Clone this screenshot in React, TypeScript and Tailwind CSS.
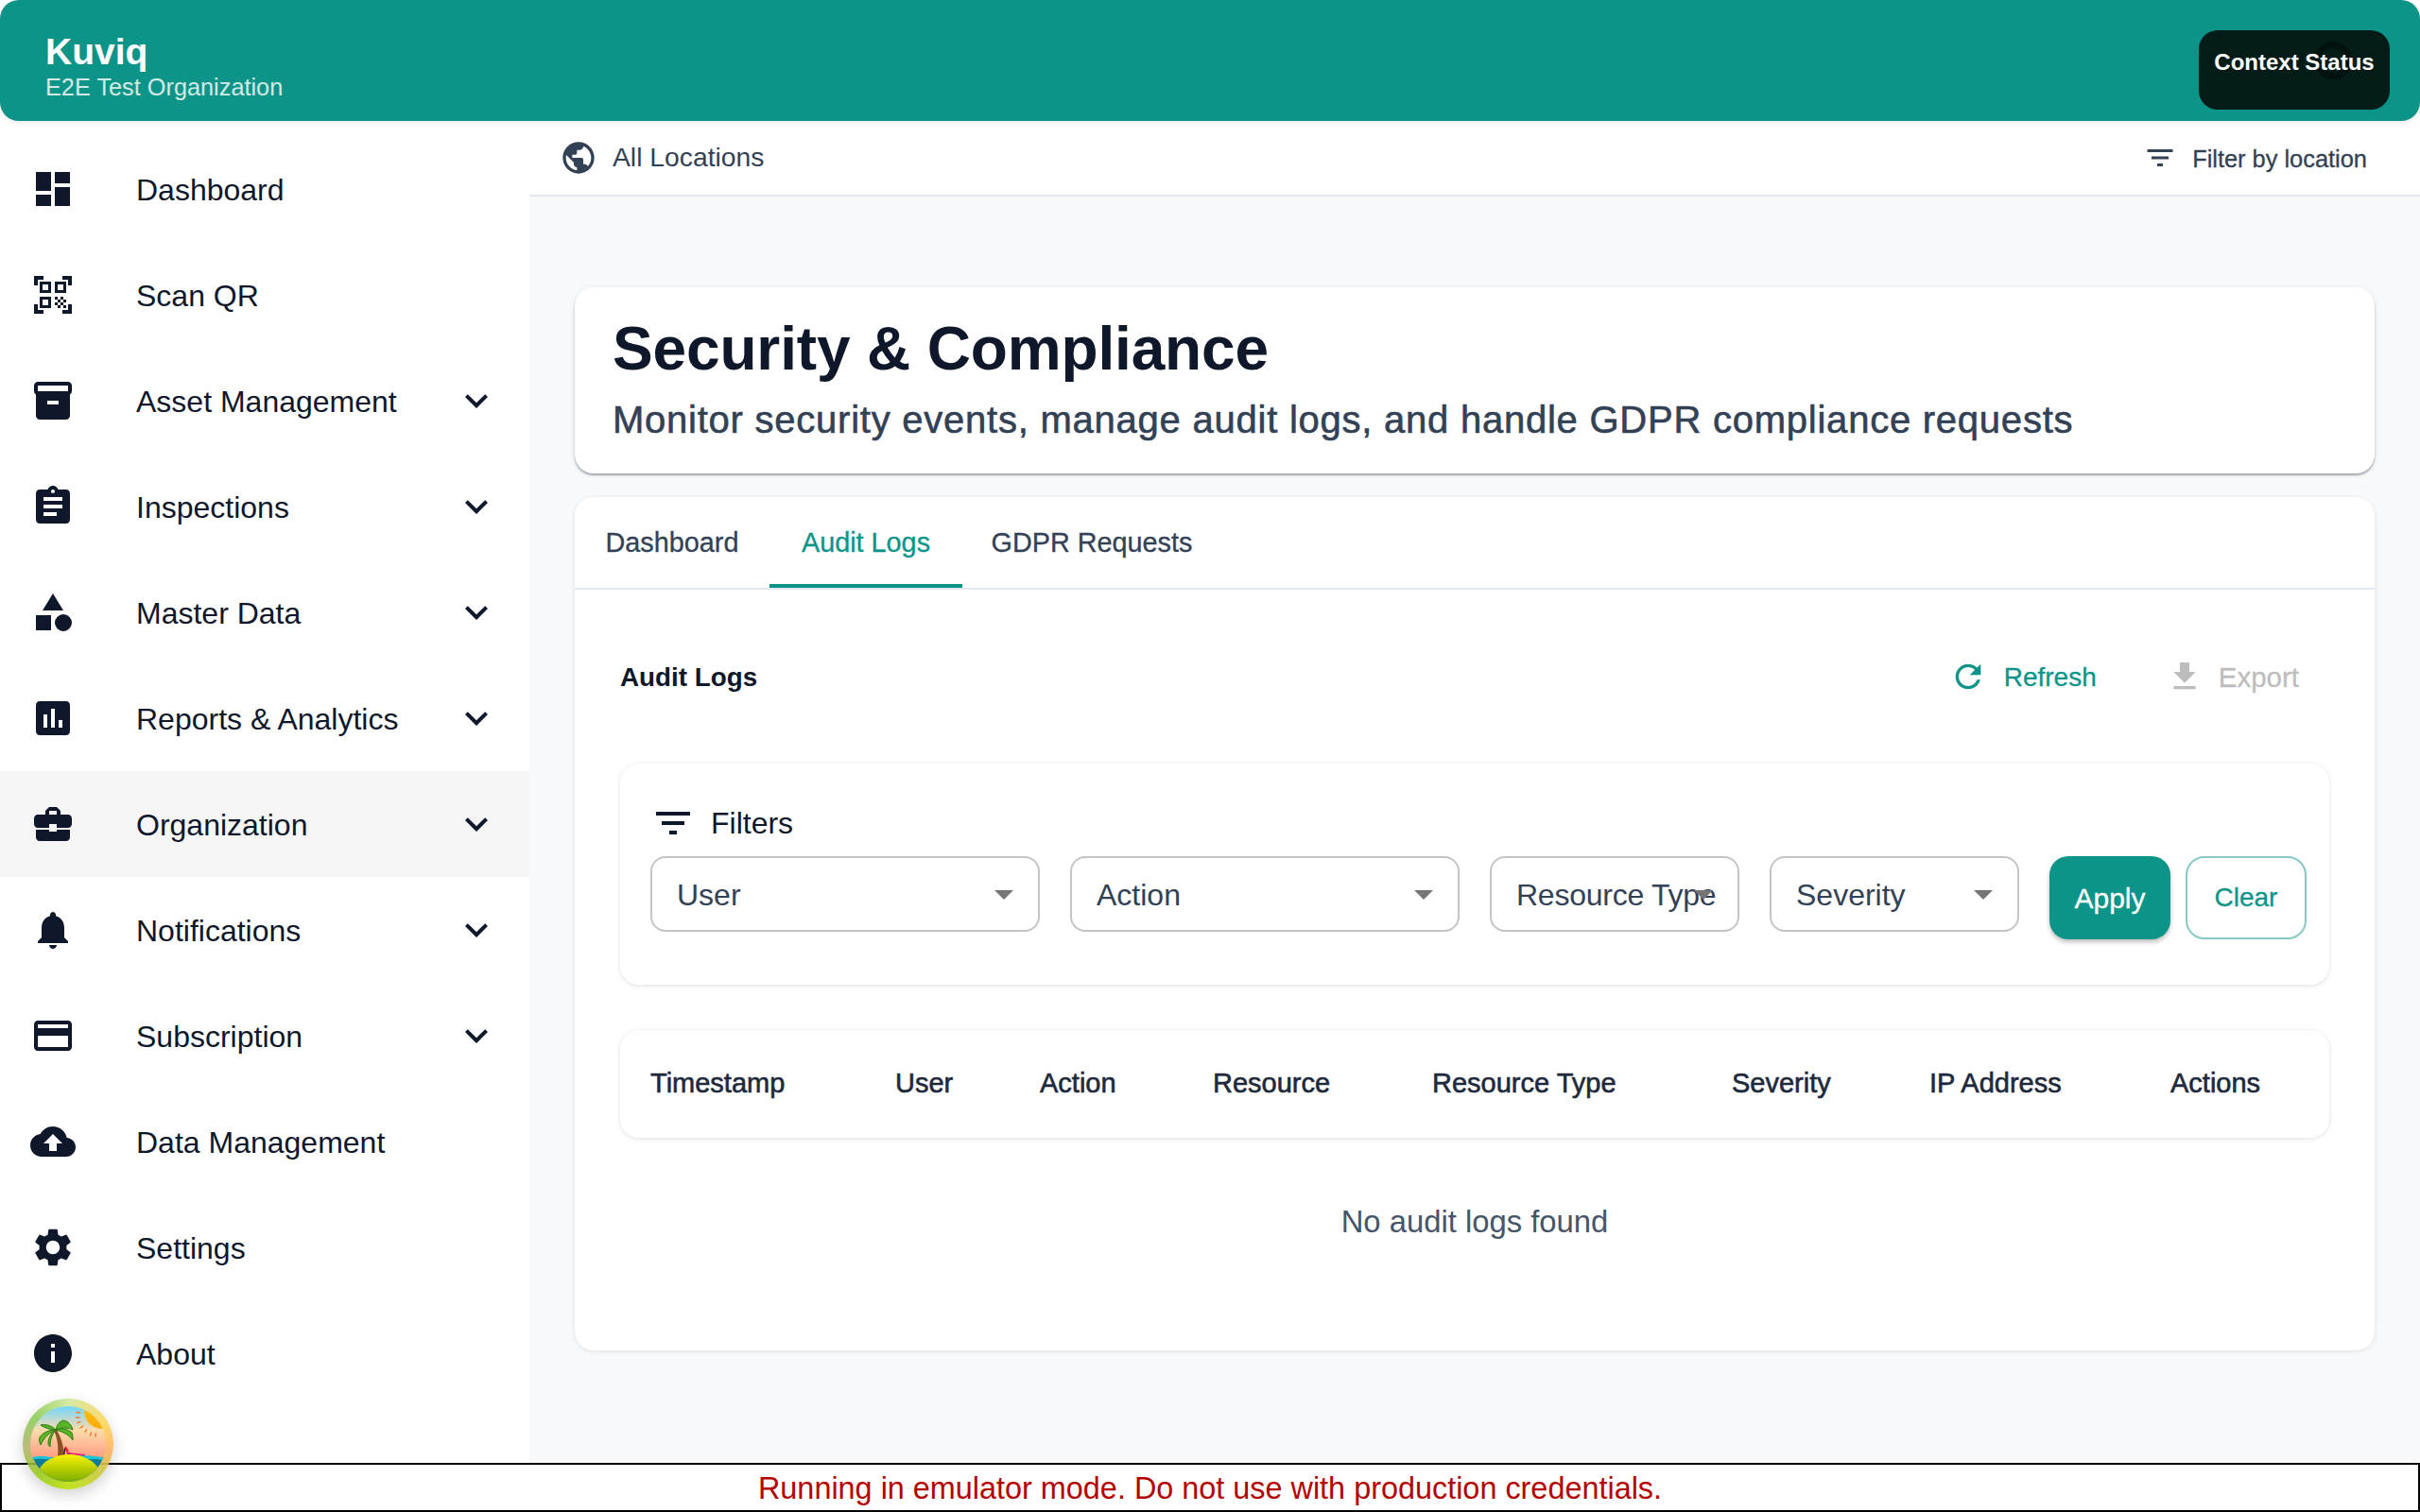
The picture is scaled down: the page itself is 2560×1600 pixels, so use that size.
import React from 'react';

const paths = {
  dashboard: 'M3 13h8V3H3v10zm0 8h8v-6H3v6zm10 0h8V11h-8v10zm0-18v6h8V3h-8z',
  qr: 'M9.5 6.5v3h-3v-3h3M11 5H5v6h6V5zm-1.5 9.5v3h-3v-3h3M11 13H5v6h6v-6zm6.5-6.5v3h-3v-3h3M19 5h-6v6h6V5zm-6 8h1.5v1.5H13V13zm1.5 1.5H16V16h-1.5v-1.5zM16 13h1.5v1.5H16V13zm-3 3h1.5v1.5H13V16zm1.5 1.5H16V19h-1.5v-1.5zM16 16h1.5v1.5H16V16zm1.5-1.5H19V16h-1.5v-1.5zm0 3H19V19h-1.5v-1.5zM22 7h-2V4h-3V2h5v5zm0 15v-5h-2v3h-3v2h5zM2 22h5v-2H4v-3H2v5zM2 2v5h2V4h3V2H2z',
  inventory: 'M20 2H4c-1 0-2 .9-2 2v3.01c0 .72.43 1.34 1 1.69V20c0 1.1 1.1 2 2 2h14c.9 0 2-.9 2-2V8.7c.57-.35 1-.97 1-1.69V4c0-1.1-1-2-2-2zm-5 12H9v-2h6v2zm5-7H4V4l16-.02V7z',
  assignment: 'M19 3h-4.18C14.4 1.84 13.3 1 12 1c-1.3 0-2.4.84-2.82 2H5c-1.1 0-2 .9-2 2v14c0 1.1.9 2 2 2h14c1.1 0 2-.9 2-2V5c0-1.1-.9-2-2-2zm-7 0c.55 0 1 .45 1 1s-.45 1-1 1-1-.45-1-1 .45-1 1-1zm2 14H7v-2h7v2zm3-4H7v-2h10v2zm0-4H7V7h10v2z',
  category: 'M12 2l-5.5 9h11zM17.5 13a4.5 4.5 0 1 0 0 9 4.5 4.5 0 0 0 0-9zM3 13.5h8v8H3z',
  assessment: 'M19 3H5c-1.1 0-2 .9-2 2v14c0 1.1.9 2 2 2h14c1.1 0 2-.9 2-2V5c0-1.1-.9-2-2-2zM9 17H7v-7h2v7zm4 0h-2V7h2v10zm4 0h-2v-4h2v4z',
  business: 'M10 16v-1H3.01L3 19c0 1.11.89 2 2 2h14c1.11 0 2-.89 2-2v-4h-7v1h-4zm10-9h-4.01V5l-2-2h-4l-2 2v2H4c-1.1 0-2 .9-2 2v3c0 1.11.89 2 2 2h6v-2h4v2h6c1.1 0 2-.9 2-2V9c0-1.1-.9-2-2-2zm-6 0h-4V5h4v2z',
  bell: 'M12 22c1.1 0 2-.9 2-2h-4c0 1.1.89 2 2 2zm6-6v-5c0-3.07-1.64-5.64-4.5-6.32V4c0-.83-.67-1.5-1.5-1.5s-1.5.67-1.5 1.5v.68C7.63 5.36 6 7.92 6 11v5l-2 2v1h16v-1l-2-2z',
  card: 'M20 4H4c-1.11 0-1.99.89-1.99 2L2 18c0 1.11.89 2 2 2h16c1.11 0 2-.89 2-2V6c0-1.11-.89-2-2-2zm0 14H4v-6h16v6zm0-10H4V6h16v2z',
  cloud: 'M19.35 10.04C18.67 6.59 15.64 4 12 4 9.11 4 6.6 5.64 5.35 8.04 2.34 8.36 0 10.91 0 14c0 3.31 2.69 6 6 6h13c2.76 0 5-2.24 5-5 0-2.64-2.05-4.78-4.65-4.96zM14 13v4h-4v-4H7l5-5 5 5h-3z',
  settings: 'M19.14 12.94c.04-.3.06-.61.06-.94 0-.32-.02-.64-.07-.94l2.03-1.58c.18-.14.23-.41.12-.61l-1.92-3.32c-.12-.22-.37-.29-.59-.22l-2.39.96c-.5-.38-1.03-.7-1.62-.94l-.36-2.54c-.04-.24-.24-.41-.48-.41h-3.84c-.24 0-.43.17-.47.41l-.36 2.54c-.59.24-1.13.57-1.62.94l-2.39-.96c-.22-.08-.47 0-.59.22L2.74 8.87c-.12.21-.08.47.12.61l2.03 1.58c-.05.3-.09.63-.09.94s.02.64.07.94l-2.03 1.58c-.18.14-.23.41-.12.61l1.92 3.32c.12.22.37.29.59.22l2.39-.96c.5.38 1.03.7 1.62.94l.36 2.54c.05.24.24.41.48.41h3.84c.24 0 .44-.17.47-.41l.36-2.54c.59-.24 1.13-.56 1.62-.94l2.39.96c.22.08.47 0 .59-.22l1.92-3.32c.12-.22.07-.47-.12-.61l-2.01-1.58zM12 15.6c-1.98 0-3.6-1.62-3.6-3.6s1.62-3.6 3.6-3.6 3.6 1.62 3.6 3.6-1.62 3.6-3.6 3.6z',
  info: 'M12 2C6.48 2 2 6.48 2 12s4.48 10 10 10 10-4.48 10-10S17.52 2 12 2zm1 15h-2v-6h2v6zm0-8h-2V7h2v2z',
  globe: 'M12 2C6.48 2 2 6.48 2 12s4.48 10 10 10 10-4.48 10-10S17.52 2 12 2zm-1 17.93c-3.95-.49-7-3.85-7-7.93 0-.62.08-1.21.21-1.79L9 15v1c0 1.1.9 2 2 2v1.93zm6.9-2.54c-.26-.81-1-1.39-1.9-1.39h-1v-3c0-.55-.45-1-1-1H8v-2h2c.55 0 1-.45 1-1V7h2c1.1 0 2-.9 2-2v-.41c2.93 1.19 5 4.06 5 7.41 0 2.08-.8 3.97-2.1 5.39z',
  filter: 'M10 18h4v-2h-4v2zM3 6v2h18V6H3zm3 7h12v-2H6v2z',
  refresh: 'M17.65 6.35C16.2 4.9 14.21 4 12 4c-4.42 0-7.99 3.58-7.99 8s3.57 8 7.99 8c3.73 0 6.84-2.55 7.73-6h-2.08c-.82 2.33-3.04 4-5.65 4-3.31 0-6-2.69-6-6s2.69-6 6-6c1.66 0 3.14.69 4.22 1.78L13 11h7V4l-2.35 2.35z',
  download: 'M19 9h-4V3H9v6H5l7 7 7-7zM5 18v2h14v-2H5z',
  expand: 'M16.59 8.59 12 13.17 7.41 8.59 6 10l6 6 6-6z',
  dropdown: 'M7 10l5 5 5-5z',
};

const Icon: React.FC<{ d: string; className?: string }> = ({ d, className }) => (
  <svg viewBox="0 0 24 24" fill="currentColor" className={className}>
    <path d={d} />
  </svg>
);

const navItems = [
  { label: 'Dashboard', icon: paths.dashboard },
  { label: 'Scan QR', icon: paths.qr },
  { label: 'Asset Management', icon: paths.inventory, more: true },
  { label: 'Inspections', icon: paths.assignment, more: true },
  { label: 'Master Data', icon: paths.category, more: true },
  { label: 'Reports & Analytics', icon: paths.assessment, more: true },
  { label: 'Organization', icon: paths.business, more: true, active: true },
  { label: 'Notifications', icon: paths.bell, more: true },
  { label: 'Subscription', icon: paths.card, more: true },
  { label: 'Data Management', icon: paths.cloud },
  { label: 'Settings', icon: paths.settings },
  { label: 'About', icon: paths.info },
];

const columns = ['Timestamp', 'User', 'Action', 'Resource', 'Resource Type', 'Severity', 'IP Address', 'Actions'];

const FilterSelect: React.FC<{ label: string; width: string }> = ({ label, width }) => (
  <div className={`relative h-20 shrink-0 rounded-[16px] border-2 border-[#c4c4c4] bg-white pl-[26px] pt-[2px] flex items-center text-[32px] text-[#334155] ${width}`}>
    <span className="whitespace-nowrap">{label}</span>
    <Icon d={paths.dropdown} className="absolute right-[12px] top-[14px] w-12 h-12 text-[#757575]" />
  </div>
);

const Logo: React.FC = () => (
  <div className="fixed left-6 top-[1480px] z-30 w-24 h-24 rounded-full p-2 shadow-[0_6px_16px_rgba(0,0,0,0.18)] bg-[conic-gradient(from_0deg,rgba(205,230,150,0.85),rgba(255,214,90,0.9)_60deg,rgba(255,175,100,0.9)_100deg,rgba(200,200,60,0.9)_130deg,rgba(190,225,20,0.95)_180deg,rgba(150,200,30,0.9)_225deg,rgba(170,170,90,0.8)_265deg,rgba(140,205,90,0.9)_310deg,rgba(205,230,150,0.85))]">
    <svg viewBox="0 0 80 80" className="w-20 h-20 block">
      <defs>
        <clipPath id="logoClip"><circle cx="40" cy="40" r="40" /></clipPath>
        <linearGradient id="logoSky" x1="0" y1="0" x2="0" y2="1">
          <stop offset="0.03" stopColor="#7ed6f6" />
          <stop offset="0.32" stopColor="#fddcaa" />
          <stop offset="0.7" stopColor="#ff9a80" />
        </linearGradient>
        <linearGradient id="logoHill" x1="0" y1="0" x2="0" y2="1">
          <stop offset="0" stopColor="#fbf300" />
          <stop offset="0.85" stopColor="#3f8c00" />
        </linearGradient>
        <linearGradient id="logoSun" x1="0" y1="0" x2="1" y2="1">
          <stop offset="0" stopColor="#ffc60a" />
          <stop offset="1" stopColor="#ff9d0a" />
        </linearGradient>
      </defs>
      <g clipPath="url(#logoClip)">
        <rect width="80" height="80" fill="url(#logoSky)" />
        <circle cx="76" cy="5" r="19" fill="url(#logoSun)" />
        <g stroke="#f5762a" strokeWidth="1.4" strokeLinecap="round">
          <path d="M49 6.5l3.5.5M48.5 12l3.5 0M50 17.5l3-1M53 23l2.6-1.8M58 27.5l1.6-2.6M63.5 31l.9-3M69 32l.2-3" />
        </g>
        <path d="M29 54C30 44 29 34 25 26l3-1c5 9 8 19 8 29z" fill="#8a5222" />
        <g fill="#58b526" stroke="#2b7a12" strokeWidth="1">
          <path d="M27 25C22 20 16 19 11 20c4 3 11 5 16 5z" />
          <path d="M27 25c1-5 4-9 8-10 5 1 9 5 10 10-6-3-12-2-18 0z" />
          <path d="M27 25c6-2 13-1 17 3 1 3 1 5 1 8-4-6-11-9-18-11z" />
          <path d="M27 25c-7 0-14 3-17 8-1 3 0 6 1 8 3-7 9-13 16-16z" />
          <path d="M27 25c-5 3-8 9-8 14 0 2 1 3 2 4 0-7 2-13 6-18z" />
        </g>
        <path d="M37 44l3 6 9 1 9 1" fill="none" stroke="#f0257a" strokeWidth="2" />
        <path d="M37 43l3 5" stroke="#e8201f" strokeWidth="2" fill="none" />
        <path d="M36.5 45l-1 9M41 50l-.6 4M56 52l-.2 3" stroke="#111" strokeWidth="1.2" fill="none" />
        <rect y="54" width="80" height="26" fill="#0d7c99" />
        <path d="M0 55c8-3 16-3 24 0s14 1 20-1 22-3 36 1v3c-10-3-20-2-30 0s-20 1-28-1-15-1-22 0z" fill="#1cc4d8" />
        <ellipse cx="41" cy="76" rx="34" ry="25" fill="url(#logoHill)" />
      </g>
    </svg>
  </div>
);

export default function App() {
  return (
    <div className="relative h-[1600px] overflow-hidden flex flex-col bg-white font-['Liberation_Sans',Arial,sans-serif] text-[#0f172a]">
      <header className="relative z-10 h-32 shrink-0 flex items-start justify-between rounded-[20px] bg-[#0d9488] pl-12 pr-8 shadow-[0_2px_6px_rgba(0,0,0,0.08)]">
        <div className="pt-[32px]">
          <div className="text-[39px] leading-[46px] font-bold text-white">Kuviq</div>
          <div className="text-[25.3px] leading-[28px] text-white/80">E2E Test Organization</div>
        </div>
        <div className="relative mt-8 h-[84px] w-[202px] rounded-[20px] bg-[#041c18] pt-5 text-center text-[24px] leading-[28px] font-bold text-white">
          <div className="absolute left-[122px] top-3 h-10 w-10 rounded-full border-[7px] border-[#02120f]" />
          <span className="relative">Context Status</span>
        </div>
      </header>

      <div className="flex flex-1 min-h-0">
        <aside className="w-[560px] shrink-0 bg-white pt-4">
          {navItems.map((item) => (
            <div key={item.label} className={`h-28 flex items-center pl-8 pr-8 ${item.active ? 'bg-[#f5f5f5]' : ''}`}>
              <div className="w-28 shrink-0"><Icon d={item.icon} className="w-12 h-12 text-[#0f172a]" /></div>
              <span className="pt-[2px] text-[32px] whitespace-nowrap">{item.label}</span>
              {item.more && <Icon d={paths.expand} className="ml-auto w-12 h-12 text-[#0f172a]" />}
            </div>
          ))}
        </aside>

        <div className="flex-1 min-w-0 bg-[#f8f9fb]">
          <div className="h-20 bg-white border-b-2 border-[#e2e8f0] flex items-center justify-between pl-8 pr-[56px] text-[#334155]">
            <div className="flex items-center gap-4">
              <Icon d={paths.globe} className="w-10 h-10" />
              <span className="pb-[2px] text-[28.3px]">All Locations</span>
            </div>
            <div className="flex items-center gap-4">
              <Icon d={paths.filter} className="w-9 h-9" />
              <span className="pt-[2px] text-[25.4px] [-webkit-text-stroke:0.3px_currentColor]">Filter by location</span>
            </div>
          </div>

          <main className="px-12 pt-24">
            <section className="h-[197px] rounded-[20px] bg-white pl-10 pt-[25px] shadow-[0_2px_2px_rgba(71,85,105,0.45),0_1px_6px_rgba(0,0,0,0.08)]">
              <h1 className="text-[64px] leading-[80px] font-bold tracking-[-0.15px] text-[#0f172a]">Security &amp; Compliance</h1>
              <p className="mt-[11px] text-[40px] leading-[48px] tracking-[0.76px] text-[#334155] [-webkit-text-stroke:0.6px_currentColor]">
                Monitor security events, manage audit logs, and handle GDPR compliance requests
              </p>
            </section>

            <section className="mt-[25px] h-[903px] rounded-[20px] bg-white shadow-[0_1px_5px_rgba(0,0,0,0.1)]">
              <div className="h-[98px] border-b-2 border-[#e2e8f0] flex text-[28.8px] text-[#334155] [-webkit-text-stroke:0.3px_currentColor]">
                <div className="h-24 w-[206px] pt-[2px] flex items-center justify-center">Dashboard</div>
                <div className="h-24 w-[204px] pt-[6px] flex items-center justify-center text-[#0d9488] border-b-4 border-[#0d9488]">Audit Logs</div>
                <div className="h-24 w-[274px] pt-[2px] flex items-center justify-center">GDPR Requests</div>
              </div>

              <div className="px-12 pt-[72px]">
                <div className="h-10 flex items-center justify-between pr-8">
                  <h2 className="pt-[2px] text-[27.8px] font-bold text-[#0f172a]">Audit Logs</h2>
                  <div className="flex items-center [-webkit-text-stroke:0.3px_currentColor]">
                    <Icon d={paths.refresh} className="w-10 h-10 text-[#0d9488]" />
                    <span className="ml-[18px] pt-[2px] text-[28px] text-[#0d9488]">Refresh</span>
                    <Icon d={paths.download} className="ml-[73px] w-10 h-10 text-[#bdbdbd]" />
                    <span className="ml-4 pt-[2px] text-[29.5px] text-[#bdbdbd]">Export</span>
                  </div>
                </div>

                <div className="mt-[72px] h-[234px] rounded-[20px] bg-white pl-8 pt-[39px] shadow-[0_1px_5px_rgba(0,0,0,0.13)]">
                  <div className="h-12 flex items-center gap-4">
                    <Icon d={paths.filter} className="w-12 h-12 text-[#0f172a]" />
                    <span className="text-[32px] text-[#0f172a]">Filters</span>
                  </div>
                  <div className="mt-[11px] flex items-start">
                    <FilterSelect label="User" width="w-[412px]" />
                    <div className="ml-8"><FilterSelect label="Action" width="w-[412px]" /></div>
                    <div className="ml-8"><FilterSelect label="Resource Type" width="w-[264px] tracking-[-0.25px]" /></div>
                    <div className="ml-8"><FilterSelect label="Severity" width="w-[264px]" /></div>
                    <div className="ml-8 h-[88px] w-32 rounded-[20px] bg-[#0d9488] flex items-center justify-center text-[30px] text-white shadow-[0_3px_5px_rgba(0,0,0,0.25)] [-webkit-text-stroke:0.3px_currentColor]">Apply</div>
                    <div className="ml-4 h-[88px] w-32 rounded-[20px] border-2 border-[#86cac3] bg-white flex items-center justify-center text-[28px] text-[#0d9488] [-webkit-text-stroke:0.3px_currentColor]">Clear</div>
                  </div>
                </div>

                <div className="mt-12 h-[114px] rounded-[20px] bg-white grid grid-cols-[259px_153px_183px_232px_317px_209px_255px_200px] items-center pl-8 text-[29px] text-[#1e293b] shadow-[0_1px_5px_rgba(0,0,0,0.13)] [-webkit-text-stroke:0.6px_currentColor]">
                  {columns.map((col) => (
                    <span key={col} className="whitespace-nowrap">{col}</span>
                  ))}
                </div>

                <p className="mt-[69px] text-center text-[32.8px] leading-[40px] text-[#475569]">No audit logs found</p>
              </div>
            </section>
          </main>
        </div>
      </div>

      <Logo />
      <div className="fixed left-0 right-0 bottom-0 z-20 h-[52px] border-2 border-black bg-white pt-[2px] flex items-center justify-center text-[32.4px] text-[#b20000]">
        Running in emulator mode. Do not use with production credentials.
      </div>
    </div>
  );
}
